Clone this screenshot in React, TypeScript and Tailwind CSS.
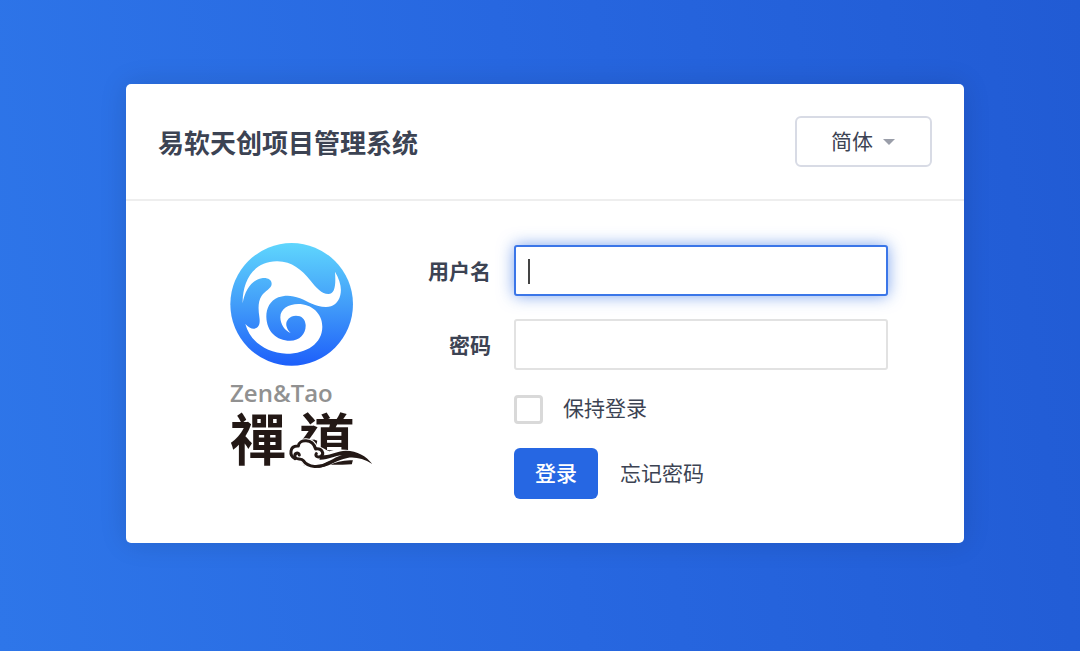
import { useState } from 'react';

function Logo() {
  return (
    <svg viewBox="0 0 145 240" className="block w-[145px] overflow-visible" role="img" aria-label="Zen&Tao 禪道">
      <defs>
        <linearGradient id="sky" x1="0" y1="0" x2="0" y2="1">
          <stop offset="0" stopColor="#5fd6fd" />
          <stop offset="0.5" stopColor="#429df9" />
          <stop offset="1" stopColor="#1d5ffa" />
        </linearGradient>
      </defs>
      <g transform="translate(-9 -6) scale(0.3333)">
        <circle cx="215" cy="208" r="184" fill="url(#sky)" />
        <path
          fill="#fff"
          d="M68 205C67 140 98 80 170 79C215 78 245 105 270 135C290 160 305 177 325 177C345 177 348 150 345 110C360 135 366 160 361 180C355 205 340 215 318 216C285 216 265 200 240 190C215 180 195 180 175 187C150 197 139 220 139 245C140 290 170 317 210 317C240 317 258 295 257 270C256 252 245 242 228 242C205 242 195 262 200 275C203 285 208 290 212 294C195 288 181 268 181 247C181 222 205 207 235 207C275 207 307 235 307 275C307 325 260 356 200 356C140 353 90 320 76 267C85 277 95 282 103 281C118 278 121 265 118 245C115 225 113 200 125 182C135 168 155 160 155 147C155 133 140 127 125 130C95 135 75 165 68 205Z"
        />
      </g>
      <text x="1" y="161" fontSize="24" fontWeight="600" fill="#919191" className="font-['Open_Sans',sans-serif]">
        Zen&amp;Tao
      </text>
      <text y="219" fontSize="56" fontWeight="700" fill="#231815" className="font-['Noto_Sans_CJK_TC',sans-serif]">
        <tspan x="1">禪</tspan>
        <tspan x="70">道</tspan>
      </text>
      <g transform="translate(-9 134) scale(0.3333)" strokeLinecap="round" strokeLinejoin="round">
        <path
          fill="#fff"
          stroke="#fff"
          strokeWidth="12"
          d="M222 250C205 238 208 212 234 212C236 190 280 188 288 220C305 220 315 230 325 236C360 222 430 232 455 264C420 244 360 246 325 266C300 282 262 280 247 258Z"
        />
        <g fill="none" stroke="#231815" strokeWidth="9">
          <path d="M238 240C236 230 222 234 225 246C229 256 244 248 250 257C264 279 300 279 325 264" />
          <path d="M225 251C207 242 208 211 235 213C237 192 278 189 287 222C306 219 314 236 303 244C294 249 284 243 289 236" />
        </g>
        <path
          fill="#231815"
          d="M305 240C330 244 350 227 378 227C412 228 438 242 457 267C430 251 405 245 382 249C350 254 325 278 290 279C318 266 340 248 366 241C345 242 325 255 298 254Z"
        />
      </g>
    </svg>
  );
}

export default function App() {
  const [account, setAccount] = useState('');
  const [password, setPassword] = useState('');
  const [keep, setKeep] = useState(false);

  return (
    <div className="flex min-h-screen items-center justify-center bg-[linear-gradient(82deg,#2e76e9_0%,#2767e0_50%,#215bd4_100%)] pb-6 pl-[10px] font-['Noto_Sans_CJK_SC',sans-serif] text-[21px] text-[#3c4353]">
      <main className="w-full max-w-[838px] rounded-[5px] bg-white shadow-[0_0_28px_rgba(0,0,0,0.12)]">
        <header className="flex items-center justify-between border-b-2 border-[#eeeeee] px-8 py-8">
          <h1 className="text-[26px] leading-8 font-bold">易软天创项目管理系统</h1>
          <div className="relative">
            <select
              aria-label="语言"
              className="block h-[51px] w-[137px] appearance-none rounded-md border-2 border-[#d8dbe5] bg-white pb-[2px] pl-[34px] outline-none"
            >
              <option>简体</option>
            </select>
            <svg viewBox="0 0 12 6" className="pointer-events-none absolute top-[23px] right-[37px] w-3">
              <path d="M0 0H12L6 6Z" fill="#9a9ea9" />
            </svg>
          </div>
        </header>

        <div className="flex items-start justify-between pr-[76px] pb-11 pl-[103px]">
          <div className="pt-10">
            <Logo />
          </div>
          <form
            className="grid grid-cols-[auto_374px] items-center gap-x-[23px] gap-y-[23px] pt-11"
            onSubmit={(e) => e.preventDefault()}
          >
            <label htmlFor="account" className="text-right font-bold">
              用户名
            </label>
            <div className="relative">
              <input
                id="account"
                type="text"
                autoFocus
                value={account}
                onChange={(e) => setAccount(e.target.value)}
                className="block h-[51px] w-full rounded-[3px] border-2 border-[#3b76e8] bg-white px-3 text-[21px] text-[#3c4353] caret-transparent shadow-[0_0_16px_rgba(38,103,227,0.6)] outline-none"
              />
              {account === '' && (
                <span className="pointer-events-none absolute top-[14px] left-[14px] h-[25px] w-[2px] bg-[#444444]" />
              )}
            </div>

            <label htmlFor="password" className="text-right font-bold">
              密码
            </label>
            <input
              id="password"
              type="password"
              value={password}
              onChange={(e) => setPassword(e.target.value)}
              className="block h-[51px] w-full rounded-[3px] border-2 border-[#e2e2e2] bg-white px-3 text-[21px] text-[#3c4353] outline-none"
            />

            <div className="col-start-2 flex h-8 items-center gap-5">
              <input
                id="keep"
                type="checkbox"
                checked={keep}
                onChange={(e) => setKeep(e.target.checked)}
                className="size-[29px] appearance-none rounded-[4px] border-3 border-[#d9d9d9] bg-white checked:bg-[#2667e3]"
              />
              <label htmlFor="keep" className="pb-[2px]">保持登录</label>
            </div>

            <div className="col-start-2 flex items-center gap-[22px]">
              <button type="submit" className="h-[51px] rounded-md bg-[#2667e3] px-[21px] pb-[2px] font-medium text-white">
                登录
              </button>
              <a href="#forgot" className="pb-[2px]">
                忘记密码
              </a>
            </div>
          </form>
        </div>
      </main>
    </div>
  );
}
